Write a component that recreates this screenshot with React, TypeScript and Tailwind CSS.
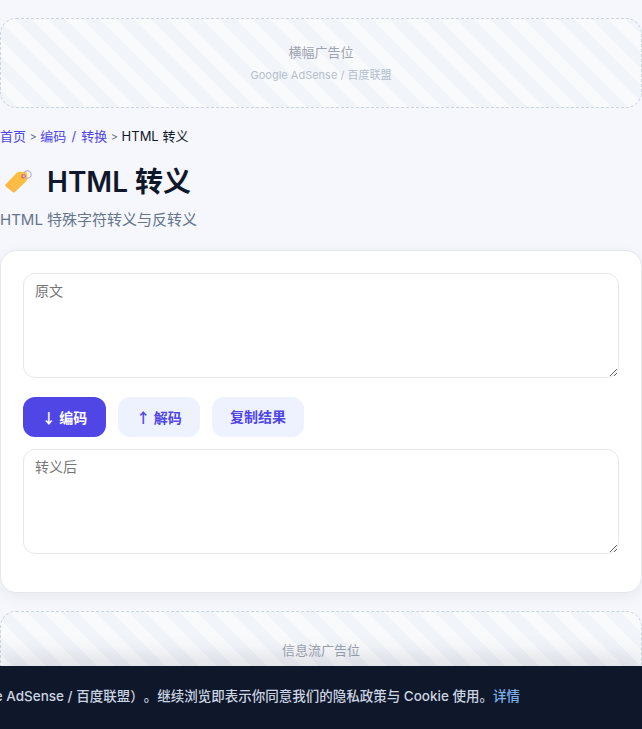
const FONT = "font-['Inter','Noto_Sans_CJK_SC',sans-serif]";

function TagIcon() {
  return (
    <svg width="32" height="30" viewBox="0 0 32 30" className="shrink-0 -translate-y-px">
      <defs>
        <linearGradient id="tag" x1="0" y1="1" x2="1" y2="0">
          <stop offset="0" stopColor="#fdb44b" />
          <stop offset="1" stopColor="#fdc53a" />
        </linearGradient>
      </defs>
      <path d="M5.5 21.5 L17 9.5 Q18 8.7 19.5 8.8 L25 9 Q27 9.2 27.2 11 L27.4 15.5 Q27.4 17 26.4 18 L15 29 Q13.8 29.8 12.7 29 L5.7 23.5 Q4.7 22.5 5.5 21.5 Z" fill="url(#tag)" transform="translate(0 -3)" />
      <circle cx="23.5" cy="10.2" r="2.2" fill="#e8505b" />
      <circle cx="23.5" cy="10.2" r="1" fill="#fbe3c0" />
      <circle cx="27.5" cy="8.5" r="3.7" fill="none" stroke="#b9b4c4" strokeWidth="1.2" />
    </svg>
  );
}

function AdSlot({ title, sub, className }: { title: string; sub?: string; className: string }) {
  return (
    <div
      className={`flex flex-col items-center justify-center rounded-2xl border border-dashed border-[#cbd5e1] bg-[repeating-linear-gradient(45deg,#f1f4f9,#f1f4f9_12px,#f9fafc_12px,#f9fafc_24px)] ${className}`}
    >
      <div className="text-[13px] leading-5 text-[#9ca3af]">{title}</div>
      {sub && <div className="mb-[2px] mt-[5px] text-[11px] leading-4 text-[#b4bfce]">{sub}</div>}
    </div>
  );
}

function Field({ placeholder }: { placeholder: string }) {
  return (
    <textarea
      placeholder={placeholder}
      className={`block h-[105px] w-full rounded-xl border border-[#e5e7ef] bg-white px-[11px] py-[7px] text-sm leading-5 outline-none placeholder:text-[#757575] ${FONT}`}
    />
  );
}

function Sep() {
  return <span className="mx-[3.5px] text-[11px]">&gt;</span>;
}

function Arrow({ glyph }: { glyph: string }) {
  return <span className="font-['Noto_Sans_CJK_SC',sans-serif]">{glyph}</span>;
}

export default function App() {
  return (
    <div className={`relative h-[729px] w-[642px] overflow-hidden bg-[#f5f7fc] pt-[18px] ${FONT}`}>
      <AdSlot title="横幅广告位" sub="Google AdSense / 百度联盟" className="h-[90px]" />

      <div className="mt-[18px] text-[13px] leading-5 text-[#64748b]">
        <span className="text-[#4f46e5]">首页</span>
        <Sep />
        <span className="text-[#4f46e5] [word-spacing:1.5px]">编码 / 转换</span>
        <Sep />
        <span className="text-[#0f172a]">HTML 转义</span>
      </div>

      <h1 className="mt-[15px] flex h-[40px] items-center gap-[15px] text-[28px] font-semibold leading-10 text-[#0f172a]">
        <TagIcon />
        HTML 转义
      </h1>

      <p className="mt-[6px] text-[15px] leading-[24px] text-[#64748b]">HTML 特殊字符转义与反转义</p>

      <div className="mt-[18px] rounded-2xl border border-[#e5e7ef] bg-white p-[22px] pb-[38px] shadow-[0_4px_14px_rgba(15,23,42,0.06)]">
        <Field placeholder="原文" />
        <div className="mt-[19px] flex gap-3">
          <button className="h-10 w-[83px] rounded-xl bg-[#4f46e5] text-sm font-bold text-white">
            <Arrow glyph="↓" /> 编码
          </button>
          <button className="h-10 w-[82px] rounded-xl bg-[#eef2ff] text-sm font-bold text-[#4f46e5]">
            <Arrow glyph="↑" /> 解码
          </button>
          <button className="h-10 w-[92px] rounded-xl bg-[#eef2ff] text-sm font-bold text-[#4f46e5]">复制结果</button>
        </div>
        <div className="mt-3">
          <Field placeholder="转义后" />
        </div>
      </div>

      <AdSlot title="信息流广告位" className="mt-[18px] h-[78px]" />

      <div className="absolute inset-x-0 bottom-0 flex h-[63px] items-center justify-end bg-[#0f172a] pr-[122px] shadow-[0_-8px_24px_rgba(15,23,42,0.12)]">
        <p className="shrink-0 -translate-y-px whitespace-nowrap text-[13.5px] font-medium text-[#cbd5e1] [text-spacing-trim:space-all]">
          本站使用 Cookie 展示广告（Google AdSense / 百度联盟）。继续浏览即表示你同意我们的隐私政策与 Cookie 使用。
          <span className="text-[#7cb0ec]">详情</span>
        </p>
      </div>
    </div>
  );
}
